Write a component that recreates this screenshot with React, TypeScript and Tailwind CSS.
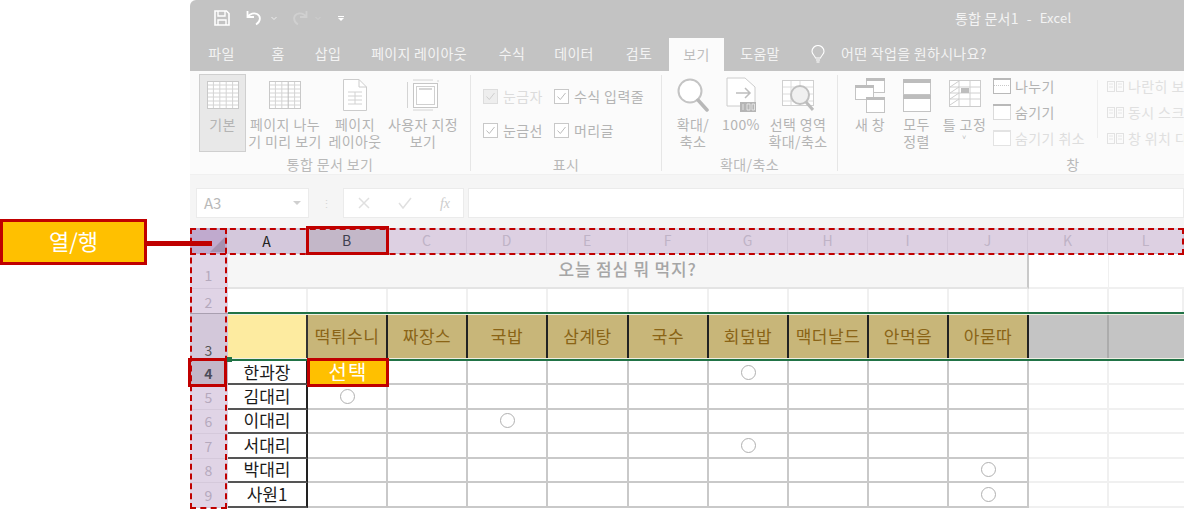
import React from 'react';

const FONT = "font-['Malgun_Gothic','Noto_Sans_CJK_KR','Noto_Sans',sans-serif]";
const HEAD_COLS = 'grid grid-cols-[37px_80px_80px_80px_80px_81px_80px_80px_80px_80px_80px_80px_76px]';
const DATA_COLS = 'grid grid-cols-[38px_80px_80px_80px_80px_81px_80px_80px_80px_80px_80px_80px_75px]';

const tabs = [
  { label: '파일', w: 'w-[63px]' },
  { label: '홈', w: 'w-[50px]' },
  { label: '삽입', w: 'w-[50px]' },
  { label: '페이지 레이아웃', w: 'w-[132px]' },
  { label: '수식', w: 'w-[54px]' },
  { label: '데이터', w: 'w-[70px]' },
  { label: '검토', w: 'w-[60px]' },
];

const columns = ['A', 'B', 'C', 'D', 'E', 'F', 'G', 'H', 'I', 'J', 'K', 'L'];
const foods = ['떡튀수니', '짜장스', '국밥', '삼계탕', '국수', '회덮밥', '맥더날드', '안먹음', '아묻따'];
const people = [
  { row: 4, name: '한과장', mark: 6, h: 'h-[24px]' },
  { row: 5, name: '김대리', mark: 1, h: 'h-[24.5px]' },
  { row: 6, name: '이대리', mark: 3, h: 'h-[24.5px]' },
  { row: 7, name: '서대리', mark: 6, h: 'h-[24.5px]' },
  { row: 8, name: '박대리', mark: 9, h: 'h-[24.5px]' },
  { row: 9, name: '사원1', mark: 9, h: 'h-[24.5px]' },
];

function BigButton({ lines, w, active, children }: { lines: string[]; w: string; active?: boolean; children: React.ReactNode }) {
  return (
    <div className={`${w} shrink-0 h-[78px] flex flex-col items-center border ${active ? 'bg-[#e8e8e8] border-[#cfcfcf]' : 'border-transparent'}`}>
      <div className="h-[40px] flex items-center justify-center">{children}</div>
      <div className="mt-[1px] text-[14px] tracking-[0.4px] leading-[17px] text-[#b4b4b4] text-center whitespace-nowrap">
        {lines.map((l) => (
          <div key={l}>{l}</div>
        ))}
      </div>
    </div>
  );
}

function SheetIcon({ w = 32, split }: { w?: number; split?: boolean }) {
  const xs = [0.2, 0.4, 0.6, 0.8].map((v) => v * w);
  return (
    <svg width={w} height="28" viewBox={`0 0 ${w} 28`} fill="none">
      <rect x="0.5" y="0.5" width={w - 1} height="27" fill="#fff" stroke="#c9c9c9" />
      {[4, 8, 12, 16, 20, 24].map((y) => (
        <path key={y} d={`M1 ${y}H${w - 1}`} stroke="#d4d4d4" />
      ))}
      {xs.map((x) => (
        <path key={x} d={`M${x} 1V27`} stroke={split && x > w * 0.5 && x < w * 0.7 ? '#bdbdbd' : '#d4d4d4'} />
      ))}
    </svg>
  );
}

function Check({ faded }: { faded?: boolean }) {
  return (
    <span className={`w-[15px] h-[15px] border flex items-center justify-center ${faded ? 'bg-[#eeeeee] border-[#dddddd]' : 'bg-white border-[#c8c8c8]'}`}>
      <svg width="11" height="11" viewBox="0 0 11 11" fill="none">
        <path d="M1.5 5.5L4.3 8.5L9.5 2" stroke={faded ? '#cfcfcf' : '#bcbcbc'} strokeWidth="1" />
      </svg>
    </span>
  );
}

function CheckItem({ label, faded, w }: { label: string; faded?: boolean; w: string }) {
  return (
    <div className={`${w} flex items-center gap-[5px]`}>
      <Check faded={faded} />
      <span className={`text-[14px] tracking-[0.4px] leading-[18px] whitespace-nowrap ${faded ? 'text-[#dcdcdc]' : 'text-[#b4b4b4]'}`}>{label}</span>
    </div>
  );
}

function WindowIcon({ top, faded }: { top?: boolean; faded?: boolean }) {
  const c = faded ? '#e3e3e3' : '#b9b9b9';
  return (
    <svg className="shrink-0" width="18" height="16" viewBox="0 0 18 16" fill="none">
      <rect x="0.5" y="0.5" width="17" height="15" fill="#fff" stroke={c} strokeDasharray={top ? '1 1' : undefined} />
      <rect x="0" y="0" width="18" height="2" fill={c} />
      {!top && !faded && <path d="M1 7.5H17" stroke="#c9c9c9" strokeDasharray="1 1" />}
    </svg>
  );
}

function SmallPane() {
  return (
    <svg className="shrink-0" width="18" height="14" viewBox="0 0 18 14" fill="none">
      <rect x="0.5" y="2.5" width="7" height="10" stroke="#e2e2e2" />
      <rect x="9.5" y="2.5" width="7" height="10" stroke="#e2e2e2" />
      <path d="M2 5H6M2 8H6M11 5H15M11 8H15" stroke="#e6e6e6" />
    </svg>
  );
}

function Divider() {
  return <div className="w-px bg-[#e6e6e6] h-[96px] mt-[4px] shrink-0" />;
}

function GroupLabel({ children }: { children: React.ReactNode }) {
  return <div className="h-[18px] mt-[-1px] text-center text-[14px] tracking-[0.4px] leading-[18px] text-[#b9b9b9] whitespace-nowrap">{children}</div>;
}

function Ribbon() {
  return (
    <div className="h-[104px] flex bg-[#fbfbfb] border-b border-[#f0f0f0] overflow-hidden">
      <div className="w-[280px] shrink-0 pt-[3px]">
        <div className="flex h-[82px] items-start pl-[9px]">
          <BigButton lines={['기본']} w="w-[47px]" active>
            <SheetIcon />
          </BigButton>
          <BigButton lines={['페이지 나누', '기 미리 보기']} w="w-[78px]">
            <SheetIcon split />
          </BigButton>
          <BigButton lines={['페이지', '레이아웃']} w="w-[62px]">
            <svg width="24" height="32" viewBox="0 0 24 32" fill="none">
              <path d="M0.5 0.5H16L23.5 8V31.5H0.5Z" fill="#fff" stroke="#cccccc" />
              <path d="M16 0.5V8H23.5" stroke="#cccccc" />
              <path d="M5 13H19M5 17H19M5 21H19M5 25H19M12 13V25" stroke="#d2d2d2" />
            </svg>
          </BigButton>
          <BigButton lines={['사용자 지정', '보기']} w="w-[74px]">
            <svg width="32" height="32" viewBox="0 0 32 32" fill="none">
              <path d="M0.5 3V29M31 1V3M6 1H26M6 31H26" stroke="#d4d4d4" />
              <rect x="6.5" y="4.5" width="24" height="24" stroke="#c6c6c6" fill="#fff" />
              <rect x="9.5" y="7.5" width="18" height="18" stroke="#d0d0d0" />
              <rect x="12" y="9" width="13" height="2" fill="#d6d6d6" />
            </svg>
          </BigButton>
        </div>
        <GroupLabel>통합 문서 보기</GroupLabel>
      </div>
      <Divider />
      <div className="w-[190px] shrink-0 pt-[16px]">
        <div className="h-[69px] pl-[12px]">
          <div className="flex h-[18px]">
            <CheckItem label="눈금자" faded w="w-[71px]" />
            <CheckItem label="수식 입력줄" w="w-[100px]" />
          </div>
          <div className="flex h-[18px] mt-[16px]">
            <CheckItem label="눈금선" w="w-[71px]" />
            <CheckItem label="머리글" w="w-[100px]" />
          </div>
        </div>
        <GroupLabel>표시</GroupLabel>
      </div>
      <Divider />
      <div className="w-[175px] shrink-0 pt-[3px]">
        <div className="flex h-[82px] pl-[6px] gap-[2px]">
          <BigButton lines={['확대/', '축소']} w="w-[50px]">
            <svg width="32" height="34" viewBox="0 0 32 34" fill="none">
              <circle cx="13" cy="13" r="11.5" stroke="#c4c4c4" strokeWidth="2" fill="#fff" />
              <path d="M21 22L30 32" stroke="#b8b8b8" strokeWidth="3.5" strokeLinecap="round" />
            </svg>
          </BigButton>
          <BigButton lines={['100%']} w="w-[42px]">
            <svg width="30" height="36" viewBox="0 0 30 36" fill="none">
              <path d="M1 1H19L29 10V29H1Z" fill="#fff" stroke="#cccccc" />
              <path d="M10 16H24M19 11L24 16L19 21" stroke="#bdbdbd" strokeWidth="1.5" />
              <rect x="14" y="25" width="16" height="10" fill="#b5b5b5" />
              <path d="M17 27V33M21 27H24V33H21ZM26 27H28.5V33H26Z" stroke="#eeeeee" strokeWidth="0.8" />
            </svg>
          </BigButton>
          <BigButton lines={['선택 영역', '확대/축소']} w="w-[68px]">
            <svg width="32" height="36" viewBox="0 0 32 36" fill="none">
              <rect x="0.5" y="3.5" width="31" height="25" fill="#fff" stroke="#d0d0d0" />
              <path d="M1 10H31M1 17H31M1 24H31M9 4V28M18 4V28" stroke="#dcdcdc" />
              <circle cx="18" cy="18" r="9" stroke="#c0c0c0" strokeWidth="2" fill="#f0f0f0" />
              <path d="M24 25L31 33" stroke="#bcbcbc" strokeWidth="3" />
            </svg>
          </BigButton>
        </div>
        <GroupLabel>확대/축소</GroupLabel>
      </div>
      <Divider />
      <div className="flex-1 pt-[3px] min-w-0">
        <div className="flex h-[82px] pl-[8px]">
          <BigButton lines={['새 창']} w="w-[48px]">
            <svg width="30" height="36" viewBox="0 0 30 36" fill="none">
              <rect x="11.5" y="1.5" width="18" height="14" fill="#fff" stroke="#c4c4c4" />
              <rect x="11" y="1" width="19" height="3" fill="#bdbdbd" />
              <rect x="0.5" y="8.5" width="18" height="14" fill="#fff" stroke="#c4c4c4" />
              <rect x="0" y="8" width="19" height="3" fill="#bdbdbd" />
              <rect x="11.5" y="21.5" width="18" height="14" fill="#fff" stroke="#c4c4c4" />
              <rect x="11" y="20" width="19" height="3" fill="#bdbdbd" />
            </svg>
          </BigButton>
          <BigButton lines={['모두', '정렬']} w="w-[45px]">
            <svg width="28" height="33" viewBox="0 0 28 33" fill="none">
              <rect x="0.5" y="0.5" width="27" height="15" fill="#fff" stroke="#c4c4c4" />
              <rect x="0" y="0" width="28" height="4" fill="#bdbdbd" />
              <rect x="0.5" y="17.5" width="27" height="15" fill="#fff" stroke="#c4c4c4" />
              <rect x="0" y="16" width="28" height="4" fill="#bdbdbd" />
            </svg>
          </BigButton>
          <BigButton lines={['틀 고정', '˅']} w="w-[51px]">
            <svg width="32" height="30" viewBox="0 0 32 30" fill="none">
              <rect x="0.5" y="0.5" width="31" height="26" fill="#fff" stroke="#cccccc" />
              <path d="M1 7H31M1 13H31M1 19H31M10 1V26M21 1V26" stroke="#d0d0d0" />
              <path d="M1 7L10 1M1 13L10 7M1 19L10 13M1 25L10 19" stroke="#cfcfcf" />
              <rect x="12" y="8" width="8" height="5" fill="#bdbdbd" />
            </svg>
          </BigButton>
          <div className="w-[107px] shrink-0 pl-[3px] pt-[3px] flex flex-col gap-[8px]">
            <div className="h-[18px] flex items-center gap-[4px] text-[14px] tracking-[0.4px] leading-[18px] text-[#b4b4b4]">
              <WindowIcon />
              나누기
            </div>
            <div className="h-[18px] flex items-center gap-[4px] text-[14px] tracking-[0.4px] leading-[18px] text-[#b4b4b4]">
              <WindowIcon top />
              숨기기
            </div>
            <div className="h-[18px] flex items-center gap-[4px] text-[14px] tracking-[0.4px] leading-[18px] text-[#dedede] whitespace-nowrap">
              <WindowIcon faded />
              숨기기 취소
            </div>
          </div>
          <div className="w-px h-[58px] mt-[6px] bg-[#eeeeee] shrink-0" />
          <div className="pl-[9px] pt-[3px] flex flex-col gap-[8px] text-[14px] tracking-[0.4px] leading-[18px] text-[#e0e0e0] whitespace-nowrap">
            <div className="h-[18px] flex items-center gap-[3px]">
              <SmallPane />
              나란히 보기
            </div>
            <div className="h-[18px] flex items-center gap-[3px]">
              <SmallPane />
              동시 스크롤
            </div>
            <div className="h-[18px] flex items-center gap-[3px]">
              <SmallPane />
              창 위치 다시 설정
            </div>
          </div>
        </div>
        <div className="pl-[214px] w-[256px]">
          <GroupLabel>창</GroupLabel>
        </div>
      </div>
    </div>
  );
}

function FormulaBar() {
  return (
    <div className="h-[53px] bg-[#f5f5f5] pt-[13px] pl-[6px] flex items-start">
      <div className="w-[113px] h-[30px] bg-white border border-[#ebebeb] flex items-center justify-between pl-[7px] pr-[7px] text-[15px] text-[#b9b9b9]">
        A3
        <span className="w-0 h-0 border-x-[4px] border-x-transparent border-t-[4px] border-t-[#cfcfcf]" />
      </div>
      <div className="w-[34px] h-[30px] flex items-center justify-center text-[#d6d6d6] text-[11px]">⋮</div>
      <div className="w-[121px] h-[30px] bg-white border border-[#ebebeb] flex items-center justify-between px-[13px]">
        <svg width="14" height="14" viewBox="0 0 14 14" fill="none">
          <path d="M2 2L12 12M12 2L2 12" stroke="#e0e0e0" strokeWidth="1.5" />
        </svg>
        <svg width="16" height="14" viewBox="0 0 16 14" fill="none">
          <path d="M2 7L6 12L14 2" stroke="#e0e0e0" strokeWidth="1.5" />
        </svg>
        <span className="font-['Liberation_Serif',serif] italic text-[14px] text-[#cccccc]">fx</span>
      </div>
      <div className="ml-[4px] flex-1 h-[30px] bg-white border border-[#ebebeb]" />
    </div>
  );
}

function Circle() {
  return <span className="w-[15px] h-[15px] rounded-full border-[1.5px] border-[#b0b0b0] bg-white" />;
}

function Sheet() {
  return (
    <div className="relative">
      <div className={`${HEAD_COLS} h-[26px]`}>
        <div className="bg-[#c0aace] relative overflow-hidden">
          <span className="absolute right-[2px] bottom-[2px] w-0 h-0 border-l-[15px] border-l-transparent border-b-[15px] border-b-[#a591b0]" />
        </div>
        {columns.map((c, i) => (
          <div
            key={c}
            className={`flex items-center justify-center text-[14px] border-r border-[#d2c5d8] ${
              i === 0
                ? 'bg-[#d4c8dc] text-[#222222]'
                : i === 1
                  ? 'bg-[#c3b7c8] text-[#3f3f4f] border-b-2 border-b-[#5f8f7a]'
                  : 'bg-[#ddd0e2] text-[#bfb3c6] border-b border-b-[#c9bcd0]'
            }`}
          >
            {c}
          </div>
        ))}
      </div>

      <div className={`${DATA_COLS} h-[35px]`}>
        <div className="bg-[#e0d4e6] border-b border-[#d3c7da] flex items-end justify-center pb-[2px] pr-[1px] text-[14px] text-[#b5a9bd]">1</div>
        <div className="col-span-10 bg-[#f6f6f6] border-b-2 border-[#e4e4e4] border-r-2 border-r-[#c9c9c9] flex items-center justify-center pb-[3px] text-[17px] tracking-[0.8px] font-medium text-[#a6a6a6]">
          오늘 점심 뭐 먹지?
        </div>
        <div className="border-r border-b-2 border-[#f0f0f0]" />
        <div className="border-b-2 border-[#f0f0f0]" />
      </div>

      <div className={`${DATA_COLS} h-[23px]`}>
        <div className="bg-[#e0d4e6] flex items-end justify-center pr-[1px] text-[14px] leading-[20px] text-[#b5a9bd]">2</div>
        {columns.map((c) => (
          <div key={c} className="border-r-2 border-[#f0f0f0]" />
        ))}
      </div>

      <div className={`${DATA_COLS} h-[49px]`}>
        <div className="flex flex-col">
          <div className="h-[2px] bg-[#e0d4e6] border-b border-[#a99fb0]" />
          <div className="flex-1 bg-[#d3c8da] flex items-end justify-center pr-[1px] text-[14px] text-[#555555]">3</div>
        </div>
        <div className="col-span-12 border-y-2 border-[#217346]">
          <div className="h-full border-y border-[#efefe4] grid grid-cols-[80px_80px_80px_80px_81px_80px_80px_80px_80px_80px_80px_75px]">
            <div className="bg-[#fdeba0] border-r-2 border-[#333333]" />
            {foods.map((f) => (
              <div key={f} className="bg-[#c8b679] border-r-2 border-[#222222] flex items-center justify-center pb-[1px] text-[17px] tracking-[0.5px] whitespace-nowrap text-[#8a6416]">
                {f}
              </div>
            ))}
            <div className="bg-[#c4c4c4] border-r-2 border-[#acacac]" />
            <div className="bg-[#c4c4c4]" />
          </div>
        </div>
      </div>

      {people.map((p) => (
        <div key={p.row} className={`${DATA_COLS} ${p.h} grid-rows-[minmax(0,1fr)]`}>
          <div className={`flex items-center justify-center pr-[1px] text-[14px] leading-[20px] border-b border-[#d5c9db] ${p.row === 4 ? 'bg-[#c3b7c8] text-[#4c4c58] font-semibold' : 'bg-[#e0d4e6] text-[#b5a9bd]'}`}>
            {p.row}
          </div>
          <div className="border-r-2 border-b-2 border-r-[#222222] border-b-[#555555] flex items-center justify-center pb-[1px] text-[17px] leading-[20px] text-[#1a1a1a]">
            {p.name}
          </div>
          {foods.map((f, i) => (
            <div key={f} className="border-r-2 border-b-2 border-[#c9c9c9] flex items-center justify-center">
              {p.mark === i + 1 && <Circle />}
            </div>
          ))}
          <div className="border-r-2 border-b-2 border-[#f0f0f0]" />
          <div className="border-b-2 border-[#f0f0f0]" />
        </div>
      ))}

      {/* 강조 표시 */}
      <div className="absolute left-[37px] top-[129px] w-[5px] h-[5px] bg-[#217346]" />
      <div className="absolute left-[117px] top-[130px] w-[82px] h-[29px] bg-[#ffc000] border-[3px] border-[#c00000] flex items-center justify-center pb-[1px] text-[20px] tracking-[1px] text-white">
        선택
      </div>
      <div className="absolute left-0 top-0 right-0 h-[27px] border-2 border-dashed border-[#c00000]" />
      <div className="absolute left-0 top-0 w-[37px] h-[281px] border-2 border-dashed border-[#c00000]" />
      <div className="absolute left-[116px] top-[-2px] w-[83px] h-[29px] border-[3px] border-[#c00000]" />
      <div className="absolute left-[-2px] top-[130px] w-[39px] h-[29px] border-[3px] border-[#c00000]" />
    </div>
  );
}

export default function App() {
  return (
    <div className={`${FONT} w-[1184px] h-[510px] bg-white flex overflow-hidden relative`}>
      <div className="w-[190px] shrink-0 pt-[219px]">
        <div className="w-[147px] h-[46px] bg-[#ffc000] border-[3px] border-[#c00000] flex items-center justify-center pb-[3px] text-[22px] text-white">
          열/행
        </div>
      </div>
      <div className="w-[994px] shrink-0">
        <div className="h-[36px] bg-[#c3c3c3] rounded-tl-[6px] flex items-center pl-[24px] relative">
          <svg width="16" height="16" viewBox="0 0 16 16" fill="none">
            <path d="M1 1H12.5L15 3.5V15H1Z" stroke="#fff" strokeWidth="1.6" />
            <path d="M4 1V6H11V1M4 15V10H12V15" stroke="#fff" strokeWidth="1.4" />
          </svg>
          <svg className="ml-[16px]" width="18" height="16" viewBox="0 0 18 16" fill="none">
            <path d="M1.5 1V7H8M2 6.5C4 3.5 8 2.5 11 4C15 6 15 11.5 10 14.5" stroke="#fff" strokeWidth="1.8" />
          </svg>
          <svg className="ml-[6px]" width="8" height="8" viewBox="0 0 8 8" fill="none">
            <path d="M1.5 3L4 5.5L6.5 3" stroke="#eeeeee" />
          </svg>
          <svg className="ml-[12px]" width="18" height="16" viewBox="0 0 18 16" fill="none">
            <path d="M16.5 1V7H10M16 6.5C14 3.5 10 2.5 7 4C3 6 3 11.5 8 14.5" stroke="#d0d0d0" strokeWidth="1.8" />
          </svg>
          <svg className="ml-[6px]" width="8" height="8" viewBox="0 0 8 8" fill="none">
            <path d="M1.5 3L4 5.5L6.5 3" stroke="#d0d0d0" />
          </svg>
          <span className="ml-[16px] flex flex-col gap-[1px] items-center">
            <span className="w-[6px] h-px bg-white" />
            <span className="w-0 h-0 border-x-[3px] border-x-transparent border-t-[3px] border-t-white" />
          </span>
          <div className="absolute left-[765px] top-0 h-[36px] flex items-center gap-[8px] text-[14px] tracking-[0.2px] text-[#f3f3f3] whitespace-nowrap">
            <span>통합 문서1</span>
            <span>-</span>
            <span className="text-[13px]">Excel</span>
          </div>
        </div>
        <div className="h-[35px] bg-[#c3c3c3] flex items-end text-[14px] tracking-[0.3px] text-[#f3f3f3]">
          {tabs.map((t) => (
            <div key={t.label} className={`${t.w} h-[35px] flex items-center justify-center whitespace-nowrap`}>
              {t.label}
            </div>
          ))}
          <div className="w-[55px] h-[33px] bg-[#fbfbfb] flex items-center justify-center text-[#bdbdbd]">보기</div>
          <div className="w-[72px] h-[35px] flex items-center justify-center">도움말</div>
          <div className="h-[35px] flex items-center gap-[15px] pl-[14px] whitespace-nowrap">
            <svg width="16" height="18" viewBox="0 0 16 18" fill="none">
              <path d="M5.5 13C5 10.5 2 9.5 2 6.5A6 6 0 0 1 14 6.5C14 9.5 11 10.5 10.5 13ZM6 15H10M6.5 17H9.5" stroke="#fff" strokeWidth="1.1" />
            </svg>
            어떤 작업을 원하시나요?
          </div>
        </div>
        <Ribbon />
        <FormulaBar />
        <Sheet />
      </div>
      <div className="absolute left-[147px] top-[241px] w-[65px] h-[5px] bg-[#c00000]" />
    </div>
  );
}
